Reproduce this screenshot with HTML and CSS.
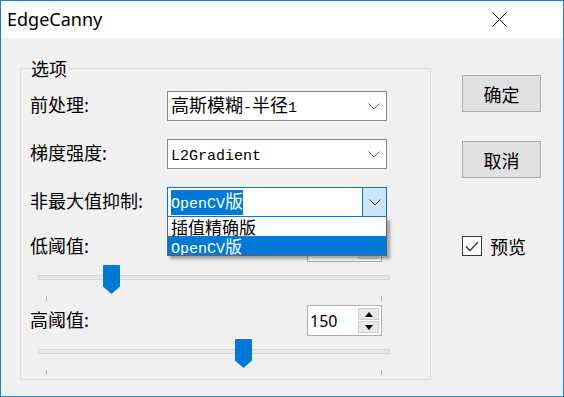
FILE: index.html
```html
<!DOCTYPE html>
<html lang="zh-CN">
<head>
    <meta charset="UTF-8" />
    <title>EdgeCanny</title>
    <link rel="stylesheet" href="styles.css">
</head>
<body>

<div class="window">
    <!-- barra de titulo -->
    <div class="titlebar">
        <span class="title">EdgeCanny</span>
        <svg class="close" width="15" height="15" viewBox="0 0 15 15">
            <path d="M0.5 0.5 L14.5 14.5 M14.5 0.5 L0.5 14.5" stroke="#000" stroke-width="1" fill="none"/>
        </svg>
    </div>

    <div class="client">
        <fieldset class="group">
            <legend>选项</legend>

            <div class="row">
                <label class="lbl">前处理:</label>
                <div class="combo">
                    <span class="val">高斯模糊<span class="en">-</span>半径<span class="en">1</span></span>
                    <span class="arrow"><svg width="12" height="7" viewBox="0 0 12 7"><path d="M0.5 0.5 L6 6 L11.5 0.5" stroke="#606060" fill="none"/></svg></span>
                </div>
            </div>

            <div class="row">
                <label class="lbl">梯度强度:</label>
                <div class="combo">
                    <span class="val"><span class="en">L2Gradient</span></span>
                    <span class="arrow"><svg width="12" height="7" viewBox="0 0 12 7"><path d="M0.5 0.5 L6 6 L11.5 0.5" stroke="#606060" fill="none"/></svg></span>
                </div>
            </div>

            <div class="row row-last">
                <label class="lbl">非最大值抑制:</label>
                <div class="combo focus">
                    <span class="val"><span class="sel"><span class="en">OpenCV</span>版</span></span>
                    <span class="arrow"><svg width="12" height="7" viewBox="0 0 12 7"><path d="M0.5 0.5 L6 6 L11.5 0.5" stroke="#404040" fill="none"/></svg></span>
                    <!-- lista desplegada -->
                    <div class="dropdown">
                        <div class="opt">插值精确版</div>
                        <div class="opt active"><span class="en">OpenCV</span>版</div>
                    </div>
                </div>
            </div>

            <div class="row row-spin">
                <label class="lbl">低阈值:</label>
                <div class="spin">
                    <span class="num">50</span>
                    <span class="spin-btns">
                        <span class="sb"><svg width="8" height="5" viewBox="0 0 8 5"><path d="M0 5 L4 0 L8 5 Z" fill="#000"/></svg></span>
                        <span class="sb"><svg width="8" height="5" viewBox="0 0 8 5"><path d="M0 0 L4 5 L8 0 Z" fill="#000"/></svg></span>
                    </span>
                </div>
            </div>
            <div class="slider" style="--v:50">
                <div class="track"></div>
                <div class="ticks"><i></i><i></i></div>
                <svg class="thumb" width="17" height="29" viewBox="0 0 17 29"><path d="M0 1 Q0 0 1 0 H16 Q17 0 17 1 V21.5 L8.5 29 L0 21.5 Z" fill="#0078d7"/></svg>
            </div>

            <div class="row row-spin">
                <label class="lbl">高阈值:</label>
                <div class="spin">
                    <span class="num">150</span>
                    <span class="spin-btns">
                        <span class="sb"><svg width="8" height="5" viewBox="0 0 8 5"><path d="M0 5 L4 0 L8 5 Z" fill="#000"/></svg></span>
                        <span class="sb"><svg width="8" height="5" viewBox="0 0 8 5"><path d="M0 0 L4 5 L8 0 Z" fill="#000"/></svg></span>
                    </span>
                </div>
            </div>
            <div class="slider" style="--v:150">
                <div class="track"></div>
                <div class="ticks"><i></i><i></i></div>
                <svg class="thumb" width="17" height="29" viewBox="0 0 17 29"><path d="M0 1 Q0 0 1 0 H16 Q17 0 17 1 V21.5 L8.5 29 L0 21.5 Z" fill="#0078d7"/></svg>
            </div>
        </fieldset>

        <!-- botones de la derecha -->
        <div class="side">
            <button class="btn">确定</button>
            <button class="btn">取消</button>
            <div class="check">
                <span class="box"><svg width="14" height="11" viewBox="0 0 14 11"><path d="M1 5.5 L5 9.5 L13 1" stroke="#333" stroke-width="1.3" fill="none"/></svg></span>
                <span>预览</span>
            </div>
        </div>
    </div>
</div>

</body>
</html>
```

FILE: styles.css
```css
body {
    margin: 0;
    background: #fff;
    font-family: "Noto Sans CJK SC", "Noto Sans", sans-serif;
    color: #000;
}

.window {
    width: 564px;
    height: 397px;
    box-sizing: border-box;
    border: 1px solid #1883d7;
    background: #f0f0f0;
    display: flex;
    flex-direction: column;
}

/* barra de titulo */
.titlebar {
    height: 37px;
    background: #fff;
    display: flex;
    align-items: center;
    justify-content: space-between;
    padding: 0 56px 0 6px;
}

.title {
    font-family: "Noto Sans", sans-serif;
    font-size: 18px;
    line-height: 37px;
}

.close {
    display: block;
}

.client {
    display: flex;
    padding-left: 19px;
}

/* cuadro de grupo */
.group {
    margin: 18px 0 0 0;
    width: 411px;
    box-sizing: border-box;
    border: 1px solid #dcdcdc;
    padding: 11px 0 0 9px;
    min-width: 0;
}

.group legend {
    font-size: 18px;
    line-height: 24px;
    padding: 0 2px;
    margin-left: -1px;
}

.row {
    display: flex;
    align-items: center;
    height: 30px;
    margin-bottom: 18px;
}

.row-last {
    margin-bottom: 14px;
}

.row-spin {
    height: 31px;
    margin-bottom: 0;
}

.lbl {
    width: 137px;
    font-size: 18px;
    line-height: 24px;
    padding-bottom: 4px;
}

.row-spin .lbl {
    width: 277px;
}

.en {
    font-family: "Liberation Mono", monospace;
    font-size: 15px;
}

/* combos */
.combo {
    position: relative;
    width: 220px;
    height: 30px;
    box-sizing: border-box;
    border: 1px solid #8a8a8a;
    background: #fff;
    display: flex;
    align-items: center;
}

.combo .val {
    flex: 1;
    padding-left: 3px;
    font-size: 18px;
    line-height: 22px;
    white-space: nowrap;
}

.combo .arrow {
    width: 24px;
    height: 100%;
    box-sizing: border-box;
    display: flex;
    align-items: center;
    justify-content: center;
}

.combo.focus {
    border-color: #0078d7;
}

.combo.focus .arrow {
    background: #cce4f7;
    border-left: 1px solid #0078d7;
}

.sel {
    background: #0078d7;
    color: #fff;
    display: inline-block;
    line-height: 21px;
}

.dropdown {
    position: absolute;
    left: -1px;
    top: 29px;
    width: 220px;
    box-sizing: border-box;
    border: 1px solid #646464;
    border-top: none;
    background: #fff;
    box-shadow: 3px 3px 3px rgba(0, 0, 0, 0.35);
    z-index: 5;
}

.opt {
    height: 19px;
    line-height: 19px;
    font-size: 17px;
    padding-left: 3px;
    white-space: nowrap;
    overflow: hidden;
}

.opt.active {
    background: #0078d7;
    color: #fff;
}

/* spin box */
.spin {
    width: 75px;
    height: 31px;
    box-sizing: border-box;
    border: 1px solid #acacac;
    background: #fff;
    display: flex;
    align-items: center;
    padding: 2px 2px 2px 0;
}

.num {
    flex: 1;
    font-family: "Noto Sans", sans-serif;
    font-size: 16px;
    padding-left: 2px;
}

.spin-btns {
    display: flex;
    flex-direction: column;
    gap: 1px;
    width: 21px;
    height: 100%;
}

.sb {
    flex: 1;
    background: #e8e8e8;
    border: 1px solid #d0d0d0;
    display: flex;
    align-items: center;
    justify-content: center;
}

/* sliders */
.slider {
    position: relative;
    margin: 1px 0 0 8px;
    padding-top: 12px;
    width: 352px;
    height: 42px;
    box-sizing: border-box;
}

.track {
    height: 5px;
    box-sizing: border-box;
    background: #e7eaea;
    border: 1px solid #d6d6d6;
}

.ticks {
    display: flex;
    justify-content: space-between;
    padding: 0 8px;
    margin-top: 16px;
}

.ticks i {
    width: 1px;
    height: 5px;
    background: #b4b4b4;
}

.thumb {
    position: absolute;
    top: 2px;
    left: calc(var(--v) / 255 * 335px - 0.5px);
}

/* columna derecha */
.side {
    margin-left: 31px;
    padding-top: 37px;
    display: flex;
    flex-direction: column;
}

.btn {
    width: 79px;
    height: 37px;
    background: #e1e1e1;
    border: 1px solid #adadad;
    font-family: "Noto Sans CJK SC", sans-serif;
    font-size: 18px;
    color: #000;
    padding: 0;
    margin-bottom: 29px;
}

.check {
    margin-top: 26px;
    display: flex;
    align-items: center;
    gap: 8px;
    font-size: 18px;
}

.box {
    width: 20px;
    height: 20px;
    box-sizing: border-box;
    border: 1px solid #333;
    background: #fff;
    display: flex;
    align-items: center;
    justify-content: center;
}
```
